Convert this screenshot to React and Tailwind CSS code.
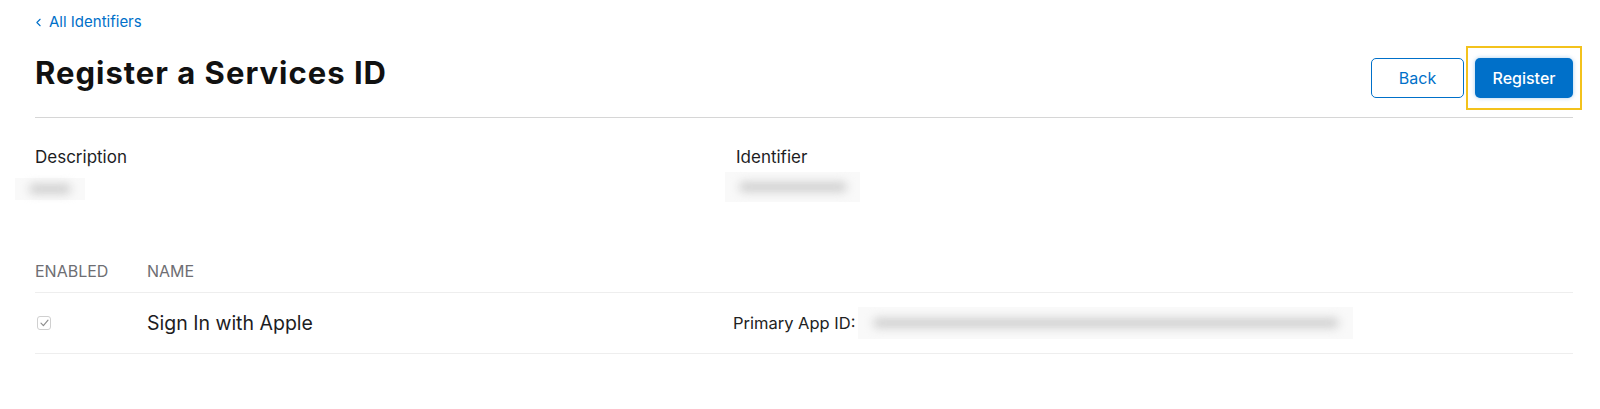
import { ChevronLeft } from 'lucide-react';

const Blur = ({ className, blob = 'inset-x-[20%]' }) => (
    <div className={`relative ${className}`}>
        <div className="absolute inset-0 bg-[#f9f9f9]" />
        <div className={`absolute top-1/2 h-[10px] -translate-y-1/2 rounded-full bg-[#cfcfcf] blur-[5px] ${blob}`} />
    </div>
);

const App = () => {
    return (
        <div className="h-[409px] w-full bg-white pl-[35px] pr-[27px] font-['Inter',sans-serif] text-[#1d1d1f]">
            {/* Back link */}
            <div className="pt-[12px]">
                <a className="flex h-[20px] items-center gap-[4px] text-[15px] leading-[20px] text-[#0070c9]">
                    <ChevronLeft size={13} strokeWidth={2} className="-ml-[3px]" />
                    All Identifiers
                </a>
            </div>

            {/* Header */}
            <div className="relative mt-[23px] flex items-start justify-between border-b border-[#d6d6d6] pb-[19px]">
                <h1 className="text-[31px] font-bold leading-[36px] tracking-[1px] text-[#111]">Register a Services ID</h1>
                <div className="mt-[3px] flex gap-[11px]">
                    <button className="h-[40px] w-[93px] rounded-[5px] border border-[#0070c9] bg-white text-[16px] text-[#0070c9]">
                        Back
                    </button>
                    <div className="relative">
                        <button className="h-[40px] w-[98px] rounded-[5px] bg-[#0070c9] text-[16px] font-medium text-white shadow-[0_0_4px_rgba(0,112,201,0.35)]">
                            Register
                        </button>
                        <div className="pointer-events-none absolute -top-[12px] -bottom-[12px] -left-[9px] -right-[9px] border-2 border-[#f3c21c]" />
                    </div>
                </div>
            </div>

            {/* Description / Identifier */}
            <div className="mt-[27px] grid grid-cols-[701px_1fr]">
                <div>
                    <p className="text-[17px] leading-[24px]">Description</p>
                    <Blur className="-ml-[20px] mt-[9px] h-[22px] w-[70px]" />
                </div>
                <div>
                    <p className="text-[17px] leading-[24px]">Identifier</p>
                    <Blur className="-ml-[11px] mt-[3px] h-[30px] w-[135px]" blob="inset-x-[10%]" />
                </div>
            </div>

            {/* Capabilities table */}
            <div className="mt-[59px]">
                <div className="grid grid-cols-[112px_1fr] border-b border-[#eeeeee] pb-[11px] text-[16px] leading-[20px] text-[#6e6e73]">
                    <span>ENABLED</span>
                    <span>NAME</span>
                </div>
                <div className="grid h-[61px] grid-cols-[112px_586px_1fr] items-center border-b border-[#eeeeee]">
                    <div className="pl-[2px]">
                        <div className="flex h-[14px] w-[14px] items-center justify-center rounded-[3px] border border-[#d0d0d0] bg-white">
                            <svg width="9" height="8" viewBox="0 0 9 8" fill="none">
                                <path d="M1 4.2 L3.4 6.6 L8 1.2" stroke="#8e8e8e" strokeWidth="1.2" strokeLinecap="round" strokeLinejoin="round" />
                            </svg>
                        </div>
                    </div>
                    <span className="text-[19.5px] leading-[28px] text-[#1d1d1f]">Sign In with Apple</span>
                    <div className="flex items-center">
                        <span className="text-[16.5px] leading-[24px] text-[#222]">Primary App ID:</span>
                        <Blur className="ml-[3px] h-[32px] w-[495px]" blob="inset-x-[3%]" />
                    </div>
                </div>
            </div>
        </div>
    );
};

export default App;
